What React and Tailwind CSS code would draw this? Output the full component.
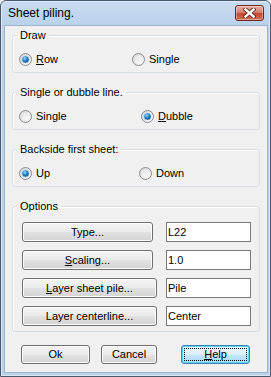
import { useId } from 'react'

function Radio({ checked }) {
  const id = useId().replace(/:/g, '')
  return (
    <svg width="13" height="13" viewBox="0 0 13 13" className="shrink-0">
      <defs>
        <linearGradient id={`r${id}`} x1="0" y1="0" x2="1" y2="1">
          <stop offset="0" stopColor="#d2d2d2" />
          <stop offset="1" stopColor="#fbfbfb" />
        </linearGradient>
        <linearGradient id={`i${id}`} x1="0" y1="0" x2="1" y2="1">
          <stop offset="0" stopColor="#e6e6e6" />
          <stop offset="1" stopColor="#fafafa" />
        </linearGradient>
        <radialGradient id={`d${id}`} cx="0.4" cy="0.35" r="0.7">
          <stop offset="0" stopColor="#9adcfb" />
          <stop offset="0.45" stopColor="#2b86cb" />
          <stop offset="1" stopColor="#0c3f78" />
        </radialGradient>
      </defs>
      <circle cx="6.5" cy="6.5" r="6" fill={`url(#r${id})`} stroke="#8a8c8e" />
      <circle cx="6.5" cy="6.5" r="4" fill={`url(#i${id})`} />
      {checked && <circle cx="6.5" cy="6.5" r="3.6" fill={`url(#d${id})`} stroke="#b6def7" strokeWidth="0.6" />}
    </svg>
  )
}

function Option({ label, u, checked, width }) {
  return (
    <div className={`flex items-center gap-[4px] ${width}`}>
      <Radio checked={checked} />
      <span className="leading-[13px]">
        {u ? <><span className="underline">{label[0]}</span>{label.slice(1)}</> : label}
      </span>
    </div>
  )
}

function Group({ title, children }) {
  return (
    <fieldset className="ml-[7px] mr-[7px] rounded-[3px] border border-[#d5dfe5] shadow-[inset_1px_1px_0_#ffffff]">
      <legend className="ml-[4px] px-[3px] leading-[13px]">{title}</legend>
      {children}
    </fieldset>
  )
}

function Btn({ children, width, height = 'h-[20px]', focused }) {
  return (
    <button
      type="button"
      className={`relative flex items-center justify-center ${width} ${height} rounded-[3px] border text-[11px] leading-[13px] text-black ${
        focused
          ? 'border-[#3c7fb1] bg-[linear-gradient(#eaf6fd,#d9f0fc_50%,#c4e8fd_50%,#add9f3)] shadow-[inset_0_0_0_1px_#5fd3f7]'
          : 'border-[#707070] bg-[linear-gradient(#f4f4f4,#eaeaea_50%,#e2e2e2_50%,#d3d3d3)] shadow-[inset_0_0_0_1px_#fcfcfc]'
      }`}
    >
      {focused && <span className="absolute inset-[2px] border border-dotted border-black" />}
      <span className="relative">{children}</span>
    </button>
  )
}

function Box({ value }) {
  return (
    <input
      readOnly
      value={value}
      className="w-[85px] h-[20px] border border-[#7a7a7a] bg-white pl-[1px] text-[11px] text-black outline-none"
    />
  )
}

export default function App() {
  return (
    <div className="w-[271px] h-[377px] flex flex-col rounded-t-[6px] border border-[#4a5a6e] bg-[linear-gradient(#c9dbf0,#b9d1ea_26px)] shadow-[inset_0_0_0_1px_rgba(255,255,255,0.45)] font-['Liberation_Sans',Arial,sans-serif] text-[11px] text-black">
      <div className="flex items-center justify-between h-[24px] pl-[7px] pr-[6px]">
        <span className="text-[12px] text-black">Sheet piling.</span>
        <div className="flex items-center justify-center w-[29px] h-[16px] rounded-[3px] border border-[#6b2a20] bg-[linear-gradient(#eab0a2,#d8826f_45%,#c4472f_55%,#d2735c)] shadow-[inset_0_0_0_1px_rgba(255,255,255,0.35)]">
          <svg width="13" height="10" viewBox="0 0 13 10">
            <path d="M2.5 1.5 L10.5 8.5 M10.5 1.5 L2.5 8.5" stroke="#5a2118" strokeWidth="4.2" strokeLinecap="square" />
            <path d="M2.5 1.5 L10.5 8.5 M10.5 1.5 L2.5 8.5" stroke="#ffffff" strokeWidth="2.4" strokeLinecap="square" />
          </svg>
        </div>
      </div>
      <div className="ml-[3px] mr-[2px] h-[348px] border border-[#9fb3cc] bg-[#f0f0f0] pt-[3px]">
        <Group title="Draw">
          <div className="flex items-center pt-[11px] pb-[6px] pl-[6px]">
            <Option label="Row" u checked width="w-[113px]" />
            <Option label="Single" />
          </div>
        </Group>
        <div className="mt-[13px]">
          <Group title="Single or dubble line.">
            <div className="flex items-center pt-[11px] pb-[6px] pl-[6px]">
              <Option label="Single" width="w-[122px]" />
              <Option label="Dubble" u checked />
            </div>
          </Group>
        </div>
        <div className="mt-[13px]">
          <Group title="Backside first sheet:">
            <div className="flex items-center pt-[11px] pb-[6px] pl-[6px]">
              <Option label="Up" checked width="w-[120px]" />
              <Option label="Down" />
            </div>
          </Group>
        </div>
        <div className="mt-[13px]">
          <Group title="Options">
            <div className="flex flex-col gap-[8px] pt-[9px] pb-[5px] pl-[9px] pr-[8px]">
              <div className="flex items-center justify-between">
                <Btn width="w-[131px]">Type...</Btn>
                <Box value="L22" />
              </div>
              <div className="flex items-center justify-between">
                <Btn width="w-[131px]"><span className="underline">S</span>caling...</Btn>
                <Box value="1.0" />
              </div>
              <div className="flex items-center justify-between">
                <Btn width="w-[135px]"><span className="underline">L</span>ayer sheet pile...</Btn>
                <Box value="Pile" />
              </div>
              <div className="flex items-center justify-between">
                <Btn width="w-[135px]">Layer centerline...</Btn>
                <Box value="Center" />
              </div>
            </div>
          </Group>
        </div>
        <div className="flex mt-[13px] pl-[16px]">
          <Btn width="w-[69px]" height="h-[19px]">Ok</Btn>
          <div className="ml-[11px]">
            <Btn width="w-[56px]" height="h-[19px]">Cancel</Btn>
          </div>
          <div className="ml-[24px]">
            <Btn width="w-[69px]" height="h-[19px]" focused><span className="underline">H</span>elp</Btn>
          </div>
        </div>
      </div>
    </div>
  )
}
